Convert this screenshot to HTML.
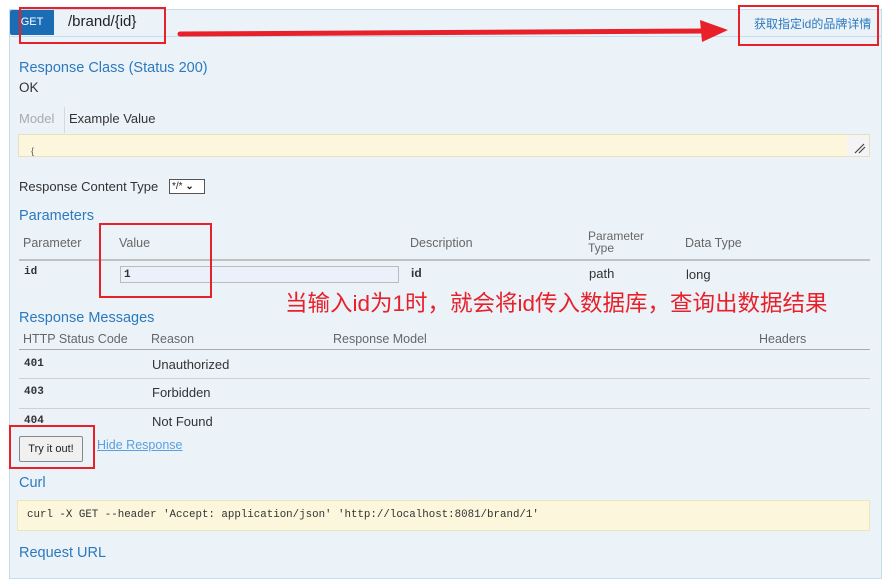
<!DOCTYPE html>
<html><head><meta charset="utf-8"><style>
*{margin:0;padding:0;box-sizing:border-box}
body{width:890px;height:565px;background:#fff;font-family:"Liberation Sans","Noto Sans CJK SC",sans-serif;position:relative;overflow:hidden;color:#222}
.a{position:absolute;white-space:nowrap}
.panel{position:absolute;left:9px;top:9px;width:873px;height:570px;background:#ebf3f9;border:1px solid #c5dbee}
.blue{color:#2d79bd;font-size:14.5px}
.hd{color:#666;font-size:12.5px}
.mono{font-family:"Liberation Mono",monospace;font-size:11px;font-weight:bold;color:#333}
.red{position:absolute;border:2px solid #e8202a}
.t{font-size:13px;color:#333}
</style></head><body>
<div class="panel"></div>
<div class="a" style="left:10px;top:36px;width:871px;height:1px;background:#c5dbee"></div>
<div class="a" style="left:10px;top:10px;width:44px;height:25px;background:#1a6db5;border-radius:2px 0 0 2px;color:#fff;font-size:11px;line-height:25px;text-align:center">GET</div>
<div class="a" style="left:68px;top:13px;font-size:15px;color:#222">/brand/{id}</div>
<div class="a" style="left:754px;top:15px;font-size:12px;color:#2d79bd">获取指定id的品牌详情</div>
<div class="red" style="left:19px;top:7px;width:147px;height:37px"></div>
<div class="red" style="left:738px;top:5px;width:141px;height:41px"></div>
<svg class="a" style="left:0;top:0" width="890" height="60"><line x1="180" y1="34" x2="705" y2="31" stroke="#e8202a" stroke-width="5" stroke-linecap="round"/><polygon points="700,20 728,30 702,42" fill="#e8202a"/></svg>

<div class="a blue" style="left:19px;top:60px">Response Class (Status 200)</div>
<div class="a t" style="left:19px;top:80px;font-size:13.5px">OK</div>
<div class="a" style="left:19px;top:111px;font-size:13px;color:#aaa">Model</div>
<div class="a" style="left:64px;top:107px;width:1px;height:26px;background:#d8d8d8"></div>
<div class="a t" style="left:69px;top:111px">Example Value</div>
<div class="a" style="left:18px;top:134px;width:852px;height:23px;background:#fbf6dc;border:1px solid #e6e0c0"></div>
<div class="a" style="left:847px;top:135px;width:22px;height:21px;background:#f4f4f4"></div>
<svg class="a" style="left:853px;top:142px" width="14" height="12"><path d="M2 11L11 2M6 11L12 5" stroke="#444" stroke-width="1.2"/></svg>
<div class="a" style="left:31px;top:146px;font-size:9px;color:#555">{</div>

<div class="a t" style="left:19px;top:179px">Response Content Type</div>
<div class="a" style="left:169px;top:179px;width:36px;height:15px;border:1px solid #555;background:#fff;font-size:10px;padding-left:2px;line-height:13px">*/* <span style="font-weight:bold">⌄</span></div>

<div class="a blue" style="left:19px;top:208px">Parameters</div>
<div class="a hd" style="left:23px;top:236px">Parameter</div>
<div class="a hd" style="left:119px;top:236px">Value</div>
<div class="a hd" style="left:410px;top:236px">Description</div>
<div class="a hd" style="left:588px;top:230px;line-height:12px;font-size:12px">Parameter<br>Type</div>
<div class="a hd" style="left:685px;top:236px">Data Type</div>
<div class="a" style="left:19px;top:259px;width:851px;height:2px;background:#c0c0c0"></div>
<div class="a mono" style="left:24px;top:266px">id</div>
<div class="a" style="left:120px;top:266px;width:279px;height:17px;background:#eaf1fb;border:1px solid #bbb"></div>
<div class="a mono" style="left:124px;top:269px">1</div>
<div class="a mono" style="left:411px;top:266px;font-family:'Liberation Sans',sans-serif;font-size:12px">id</div>
<div class="a t" style="left:589px;top:266px">path</div>
<div class="a t" style="left:686px;top:267px">long</div>
<div class="red" style="left:99px;top:223px;width:113px;height:75px"></div>
<div class="a" style="left:285px;top:286px;font-size:22.5px;color:#e8202a">当输入id为1时，就会将id传入数据库，查询出数据结果</div>

<div class="a blue" style="left:19px;top:310px">Response Messages</div>
<div class="a hd" style="left:23px;top:332px">HTTP Status Code</div>
<div class="a hd" style="left:151px;top:332px">Reason</div>
<div class="a hd" style="left:333px;top:332px">Response Model</div>
<div class="a hd" style="left:759px;top:332px">Headers</div>
<div class="a" style="left:19px;top:349px;width:851px;height:1px;background:#aaa"></div>
<div class="a mono" style="left:24px;top:358px">401</div>
<div class="a t" style="left:152px;top:357px">Unauthorized</div>
<div class="a" style="left:19px;top:378px;width:851px;height:1px;background:#d0d0d0"></div>
<div class="a mono" style="left:24px;top:386px">403</div>
<div class="a t" style="left:152px;top:385px">Forbidden</div>
<div class="a" style="left:19px;top:408px;width:851px;height:1px;background:#d0d0d0"></div>
<div class="a mono" style="left:24px;top:415px">404</div>
<div class="a t" style="left:152px;top:414px">Not Found</div>

<div class="a" style="left:19px;top:436px;width:64px;height:26px;background:#f0f0f0;border:1px solid #888;border-radius:2px;font-size:11px;text-align:center;line-height:24px;color:#222">Try it out!</div>
<div class="red" style="left:9px;top:425px;width:86px;height:44px"></div>
<div class="a" style="left:97px;top:438px;font-size:12.5px;color:#5aa0dc;text-decoration:underline">Hide Response</div>

<div class="a blue" style="left:19px;top:475px">Curl</div>
<div class="a" style="left:17px;top:500px;width:853px;height:31px;background:#fbf6dc;border:1px solid #ede5bd"></div>
<div class="a" style="left:27px;top:509px;font-family:'Liberation Mono',monospace;font-size:10.8px;color:#333">curl -X GET --header 'Accept: application/json' 'http://localhost:8081/brand/1'</div>
<div class="a blue" style="left:19px;top:545px">Request URL</div>
</body></html>
